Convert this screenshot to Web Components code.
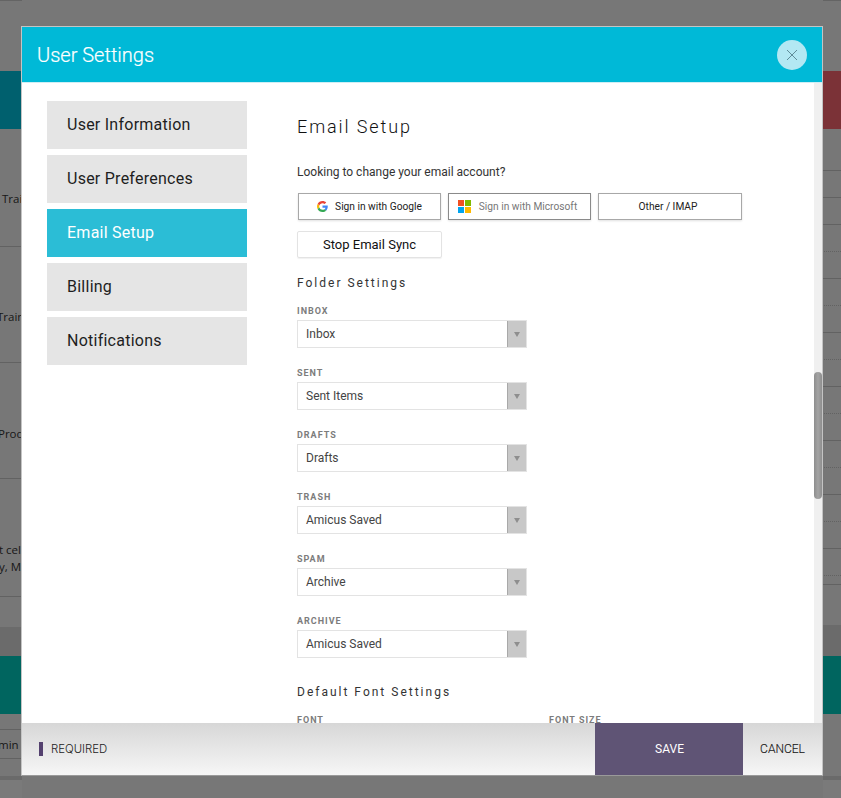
<!DOCTYPE html>
<html lang="en"><head><meta charset="utf-8"><title>User Settings</title>
<style>
html,body{margin:0;height:100%;overflow:hidden;font-family:Roboto,"Liberation Sans",sans-serif}
body{width:841px;height:798px;position:relative}
</style></head><body>
<app-backdrop></app-backdrop>
<settings-dialog heading="User Settings">
  <nav-item slot="nav">User Information</nav-item>
  <nav-item slot="nav">User Preferences</nav-item>
  <nav-item slot="nav" active>Email Setup</nav-item>
  <nav-item slot="nav">Billing</nav-item>
  <nav-item slot="nav">Notifications</nav-item>

  <email-setup></email-setup>

  <required-note slot="footer"></required-note>
</settings-dialog>

<script>
function shell(host,html){host.attachShadow({mode:'open'}).innerHTML=html;}

customElements.define('app-backdrop',class extends HTMLElement{
  connectedCallback(){
    const rows=(list)=>list.map(r=>{
      return `<div class="r ${r[1]||''}" style="height:${r[0]}px">${r[2]||''}</div>`}).join('');
    shell(this,`<style>
      :host{display:grid;grid-template-columns:22px 1fr 18px;width:841px;height:798px;background:#eee;font:11.5px/17px "Open Sans",sans-serif;color:#333}
      .col{overflow:hidden;display:flex;flex-direction:column;white-space:nowrap}
      .r{box-sizing:border-box;flex:none}
      .first{border-top:1px solid #c8c8c8}
      .tl{background:#00c0dc}.rd{background:#f6646e}.gr{background:#00cabe}
      .band{background:#d6d6d6}
      .s{border-bottom:1px solid #c4c4c4}
      .d{position:relative}
      .d::after{content:"";position:absolute;left:1px;right:0;bottom:0;border-bottom:1px dotted #c4c4c4}
      .foot{background:#d4d4d4}
      .end{flex:1;background:#f4f4f4}
      .t{display:block;padding-top:61px}
    </style>
    <div class="col">${rows([
      [71,'first'],[58,'tl'],
      [118,'s','<span class="t" style="margin-left:2px">Training</span>'],
      [116,'s','<span class="t" style="margin-left:-3px">Training</span>'],
      [116,'s','<span class="t" style="padding-top:62px;margin-left:-2px">Product</span>'],
      [118,'s','<span class="t" style="padding-top:62px;margin-left:-1px">t cell</span><span style="display:block;margin-left:-1px">y, Ma</span>'],
      [30,''],[29,'band'],[58,'gr'],[16,'s'],
      [29,'s','<span style="display:block;padding-top:6px;margin-left:-2px">min</span>'],
      [17,''],[4,'foot']
    ])}<div class="end"></div></div>
    <div></div>
    <div class="col">${rows([
      [71,'first'],[58,'rd'],[42,'s'],[27,'s'],[27,'s'],
      [27,'d'],[27,'s'],[27,'d'],[27,'s'],[27,'d'],[27,'s'],[27,'d'],[27,'s'],[27,'d'],[27,'s'],[27,'d'],[27,'s'],
      [27,'d'],[9,'s'],[40,''],[31,'band'],[58,'gr'],[62,''],[4,'foot']
    ])}<div class="end"></div></div>`);
  }
});

customElements.define('settings-dialog',class extends HTMLElement{
  connectedCallback(){
    shell(this,`<style>
      :host{position:absolute;inset:0;display:flex;box-sizing:border-box;padding:26px 18px 22px 21px;background:rgba(0,0,0,.5)}
      .win{flex:1;display:flex;flex-direction:column;border:1px solid #c4c4c4;border-bottom-color:#9a9a9a;background:#fff;min-height:0}
      header{flex:none;height:56px;box-sizing:border-box;background:#00b9d7;border-bottom:1px solid #cfeef4;display:flex;align-items:center;justify-content:space-between;padding:0 15px}
      h1{margin:0;font:300 20px/24px Roboto,sans-serif;color:#fff;-webkit-text-stroke:.2px #fff}
      .close{width:30px;height:30px;border-radius:50%;background:#b3e8f3;display:flex;align-items:center;justify-content:center}
      .mid{flex:1;min-height:0;display:flex;overflow:hidden}
      nav{flex:none;width:250px;box-sizing:border-box;padding:18px 0 0 25px;display:flex;flex-direction:column;gap:6px}
      .body{flex:1;min-width:0;overflow:hidden;padding-left:25px}
      .track{flex:none;width:8px;background:#f0f0f0;padding-top:289px}
      .thumb{height:127px;border-radius:4px;background:linear-gradient(90deg,#8e8e8e,#a4a4a4 50%,#8e8e8e)}
      footer{flex:none;height:52px;background:linear-gradient(#d7d7d7,#f6f6f6);display:flex;align-items:stretch}
      .sp{flex:1;display:flex;align-items:center;padding-left:17px}
      .save{width:147px;padding-left:1px;background:#5f5475;color:#fff;display:flex;align-items:center;justify-content:center;font:400 12px Roboto,sans-serif}
      .cancel{width:79px;display:flex;align-items:center;justify-content:center;font:300 12px Roboto,sans-serif;color:#222;-webkit-text-stroke:.15px #222}
    </style>
    <div class="win">
      <header><h1>${this.getAttribute('heading')}</h1>
        <div class="close"><svg width="14" height="14" viewBox="0 0 14 14"><path d="M2 2 L12 12 M12 2 L2 12" stroke="#5f8c98" stroke-width="1" fill="none"/></svg></div>
      </header>
      <div class="mid">
        <nav><slot name="nav"></slot></nav>
        <div class="body"><slot></slot></div>
        <div class="track"><div class="thumb"></div></div>
      </div>
      <footer>
        <div class="sp"><slot name="footer"></slot></div>
        <div class="save">SAVE</div>
        <div class="cancel">CANCEL</div>
      </footer>
    </div>`);
  }
});

customElements.define('nav-item',class extends HTMLElement{
  constructor(){super();shell(this,`<style>
    :host{display:flex;align-items:center;box-sizing:border-box;width:200px;height:48px;padding:0 0 1px 20px;background:#e5e5e5;color:#1e1e1e;font:400 16px Roboto,sans-serif;letter-spacing:.25px}
    :host([active]){background:#2bbdd6;color:#fff}
  </style><slot></slot>`);}
});

customElements.define('required-note',class extends HTMLElement{
  constructor(){super();shell(this,`<style>
    :host{display:flex;align-items:center;gap:8px;font:300 11.4px Inter,sans-serif;color:#222}
    i{display:block;width:4px;height:14px;background:#54416f}
  </style><i></i><span>REQUIRED</span>`);}
});

customElements.define('sign-button',class extends HTMLElement{
  constructor(){super();shell(this,`<style>
    :host{display:flex;align-items:center;justify-content:center;gap:7px;box-sizing:border-box;width:143px;height:27px;border:1px solid #a8a8a8;border-width:1px 1.5px 1.5px 1px;box-shadow:0 1px 2px rgba(0,0,0,.12);background:#fff;font:400 10.2px Roboto,sans-serif;color:#222;white-space:nowrap}
    :host([dark]){border-color:#8a8a8a;color:#777;gap:8px;padding-right:4px}
    :host([wide]){width:144px;padding-right:4px}
    ::slotted(svg){flex:none}
  </style><slot></slot>`);}
});

customElements.define('folder-select',class extends HTMLElement{
  connectedCallback(){
    shell(this,`<style>
      :host{display:block;width:230px;margin-bottom:20px}
      label{display:block;font:700 9px/11px Roboto,sans-serif;letter-spacing:1px;color:#7c7c7c;margin-bottom:3px}
      .box{box-sizing:border-box;height:28px;border:1px solid #e3e3e3;display:flex;font:400 12px Roboto,sans-serif;color:#444}
      .v{flex:1;display:flex;align-items:center;padding-left:8px}
      .a{width:19px;background:#c8c8c8;border-left:1px solid #a9a9a9;box-sizing:border-box;display:flex;align-items:center;justify-content:center}
      .a i{display:block;width:0;height:0;border:3px solid transparent;border-top:5px solid #8e8e8e;border-bottom:0}
    </style>
    <label>${this.getAttribute('label')}</label>
    <div class="box"><div class="v">${this.getAttribute('value')}</div><div class="a"><i></i></div></div>`);
  }
});

customElements.define('email-setup',class extends HTMLElement{
  connectedCallback(){
    shell(this,`<style>
      :host{display:block;color:#222}
      h2{margin:0;padding-top:33px;font:300 18px/21px Roboto,sans-serif;letter-spacing:1.9px;color:#111}
      p{margin:28px 0 0;font:400 12px/15px Roboto,sans-serif;color:#333}
      .btns{display:flex;gap:7px;margin:13px 0 0 1px}
      .stop{box-sizing:border-box;width:145px;height:27px;margin-top:11px;border:1px solid #e3e3e3;border-radius:2px;box-shadow:0 1px 1px rgba(0,0,0,.06);display:flex;align-items:center;justify-content:center;font:400 13px Roboto,sans-serif;color:#111}
      h3{margin:0;font:400 12px/15px Roboto,sans-serif;letter-spacing:2px;color:#333}
      .fs{margin:18px 0 15px}
      .ds{margin:27px 0 15px}
      .row{display:flex;font:700 9px/11px Roboto,sans-serif;letter-spacing:1px;color:#7c7c7c}
      .row span{width:252px}
    </style>
    <h2>Email Setup</h2>
    <p>Looking to change your email account?</p>
    <div class="btns">
      <sign-button><svg width="11" height="11" viewBox="0 0 48 48"><path fill="#EA4335" d="M24 9.5c3.5 0 6.7 1.2 9.2 3.6l6.9-6.9C35.9 2.4 30.5 0 24 0 14.6 0 6.5 5.4 2.6 13.2l8 6.2C12.5 13.7 17.8 9.5 24 9.5z"/><path fill="#4285F4" d="M46.9 24.5c0-1.6-.1-3.1-.4-4.5H24v9h12.9c-.6 3-2.2 5.5-4.7 7.2l7.7 6c4.4-4.1 7-10.2 7-17.7z"/><path fill="#FBBC05" d="M10.5 28.6c-.5-1.4-.8-3-.8-4.6s.3-3.2.8-4.6l-8-6.2C.9 16.5 0 20.1 0 24s.9 7.5 2.6 10.8l7.9-6.2z"/><path fill="#34A853" d="M24 48c6.5 0 11.9-2.1 15.9-5.8l-7.7-6c-2.2 1.4-4.9 2.3-8.2 2.3-6.2 0-11.5-4.2-13.4-9.9l-8 6.2C6.5 42.6 14.6 48 24 48z"/></svg><span>Sign in with Google</span></sign-button>
      <sign-button dark><svg width="13" height="13" viewBox="0 0 13 13"><rect width="6" height="6" fill="#f25022"/><rect x="7" width="6" height="6" fill="#7fba00"/><rect y="7" width="6" height="6" fill="#00a4ef"/><rect x="7" y="7" width="6" height="6" fill="#ffb900"/></svg><span>Sign in with Microsoft</span></sign-button>
      <sign-button wide><span>Other / IMAP</span></sign-button>
    </div>
    <div class="stop">Stop Email Sync</div>
    <h3 class="fs">Folder Settings</h3>
    <folder-select label="INBOX" value="Inbox"></folder-select>
    <folder-select label="SENT" value="Sent Items"></folder-select>
    <folder-select label="DRAFTS" value="Drafts"></folder-select>
    <folder-select label="TRASH" value="Amicus Saved"></folder-select>
    <folder-select label="SPAM" value="Archive"></folder-select>
    <folder-select label="ARCHIVE" value="Amicus Saved"></folder-select>
    <h3 class="ds">Default Font Settings</h3>
    <div class="row"><span>FONT</span><span>FONT SIZE</span></div>`);
  }
});
</script>
</body></html>
